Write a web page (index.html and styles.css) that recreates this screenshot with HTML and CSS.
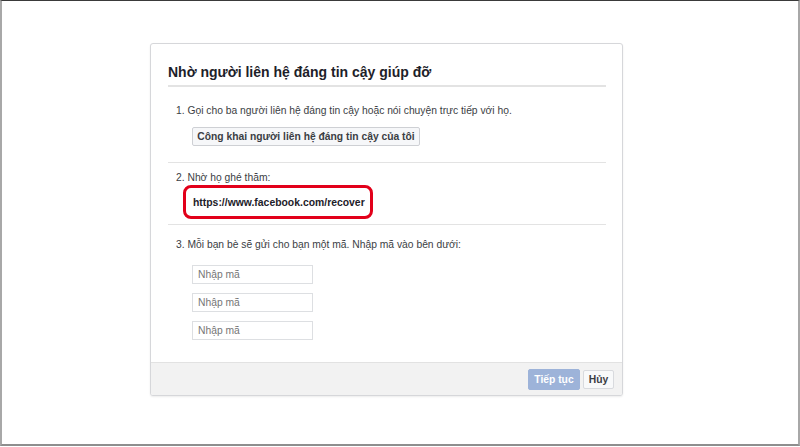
FILE: index.html
```html
<!DOCTYPE html>
<html lang="vi">
<head>
<meta charset="utf-8">
<title>Nhờ người liên hệ đáng tin cậy giúp đỡ</title>
<link rel="stylesheet" href="styles.css">
</head>
<body>
<div class="frame">
  <div class="dialog">
    <div class="dialog-body">
      <div class="dialog-header">
        <h2 class="dialog-title">Nhờ người liên hệ đáng tin cậy giúp đỡ</h2>
      </div>
      <div class="step step-one">
        <p class="step-text">1. Gọi cho ba người liên hệ đáng tin cậy hoặc nói chuyện trực tiếp với họ.</p>
        <button class="btn-secondary">Công khai người liên hệ đáng tin cậy của tôi</button>
      </div>
      <div class="step step-two">
        <p class="step-text">2. Nhờ họ ghé thăm:</p>
        <div class="link-box">https://www.facebook.com/recover</div>
      </div>
      <div class="step step-three">
        <p class="step-text">3. Mỗi bạn bè sẽ gửi cho bạn một mã. Nhập mã vào bên dưới:</p>
        <div class="code-list">
          <input class="code-input" type="text" placeholder="Nhập mã">
          <input class="code-input" type="text" placeholder="Nhập mã">
          <input class="code-input" type="text" placeholder="Nhập mã">
        </div>
      </div>
    </div>
    <div class="dialog-footer">
      <button class="btn-primary">Tiếp tục</button>
      <button class="btn-cancel">Hủy</button>
    </div>
  </div>
</div>
</body>
</html>
```
FILE: styles.css
```css
* { box-sizing: border-box; }
html, body { margin: 0; padding: 0; background: #fff; }
body {
  width: 800px;
  height: 447px;
  overflow: hidden;
  font-family: "Liberation Sans", Arial, sans-serif;
  color: #1d2129;
}
.frame {
  width: 800px;
  height: 446px;
  border-top: 1px solid #3a3a3a;
  border-left: 2px solid #a8a8a8;
  border-right: 2px solid #a8a8a8;
  border-bottom: 2px solid #8e8e8e;
  padding-top: 42px;
  padding-left: 148px;
}
.dialog {
  width: 473px;
  border: 1px solid #d6d7da;
  border-radius: 3px;
  background: #fff;
  box-shadow: 0 1px 2px rgba(0,0,0,0.08);
  overflow: hidden;
}
.dialog-body {
  padding: 0 16px 0 17px;
}
.dialog-header {
  padding: 19px 0 4px;
  border-bottom: 2px solid #e3e3e3;
}
.dialog-title {
  margin: 0;
  font-size: 14px;
  line-height: 18px;
  font-weight: bold;
  color: #1d2129;
}
.step { border-bottom: 1px solid #e3e3e3; }
.step-three { border-bottom: none; }
.step-text {
  margin: 0 0 0 8px;
  font-size: 10.3px;
  line-height: 14px;
  color: #3b3e44;
}
.step-one { padding: 17px 0 16px; }
.step-two { padding: 8px 0 5px; }
.step-three { padding: 13px 0 22px; }
.btn-secondary {
  display: block;
  margin: 9px 0 0 24px;
  height: 19px;
  width: 228px;
  padding: 0;
  font-family: inherit;
  font-size: 10.3px;
  font-weight: bold;
  color: #3b3e44;
  background: #f6f7f9;
  border: 1px solid #ced0d4;
  border-radius: 2px;
}
.link-box {
  margin-left: 15px;
  width: 190px;
  height: 34px;
  border: 3px solid #e2001a;
  border-radius: 8px;
  padding-left: 7px;
  display: flex;
  align-items: center;
  font-size: 10.4px;
  font-weight: bold;
  color: #1d2129;
}
.code-list {
  margin: 13px 0 0 24px;
  display: flex;
  flex-direction: column;
  gap: 9px;
}
.code-input {
  width: 121px;
  height: 19px;
  border: 1px solid #dddfe2;
  border-radius: 0;
  padding: 0 5px;
  font-family: inherit;
  font-size: 10.3px;
  color: #1d2129;
  background: #fff;
}
.code-input::placeholder { color: #767676; }
.dialog-footer {
  height: 33px;
  background: #f2f2f2;
  border-top: 1px solid #e2e2e2;
  display: flex;
  align-items: center;
  justify-content: flex-end;
  gap: 3px;
  padding-right: 8px;
}
.btn-primary {
  width: 52px;
  height: 21px;
  padding: 0;
  font-family: inherit;
  font-size: 10.3px;
  font-weight: bold;
  color: #fff;
  background: #9db3d9;
  border: 1px solid #9db3d9;
  border-radius: 2px;
}
.btn-cancel {
  width: 31px;
  height: 19px;
  padding: 0;
  font-family: inherit;
  font-size: 10.3px;
  font-weight: bold;
  color: #3b3e44;
  background: #f8f9fa;
  border: 1px solid #d8dade;
  border-radius: 2px;
}
```
